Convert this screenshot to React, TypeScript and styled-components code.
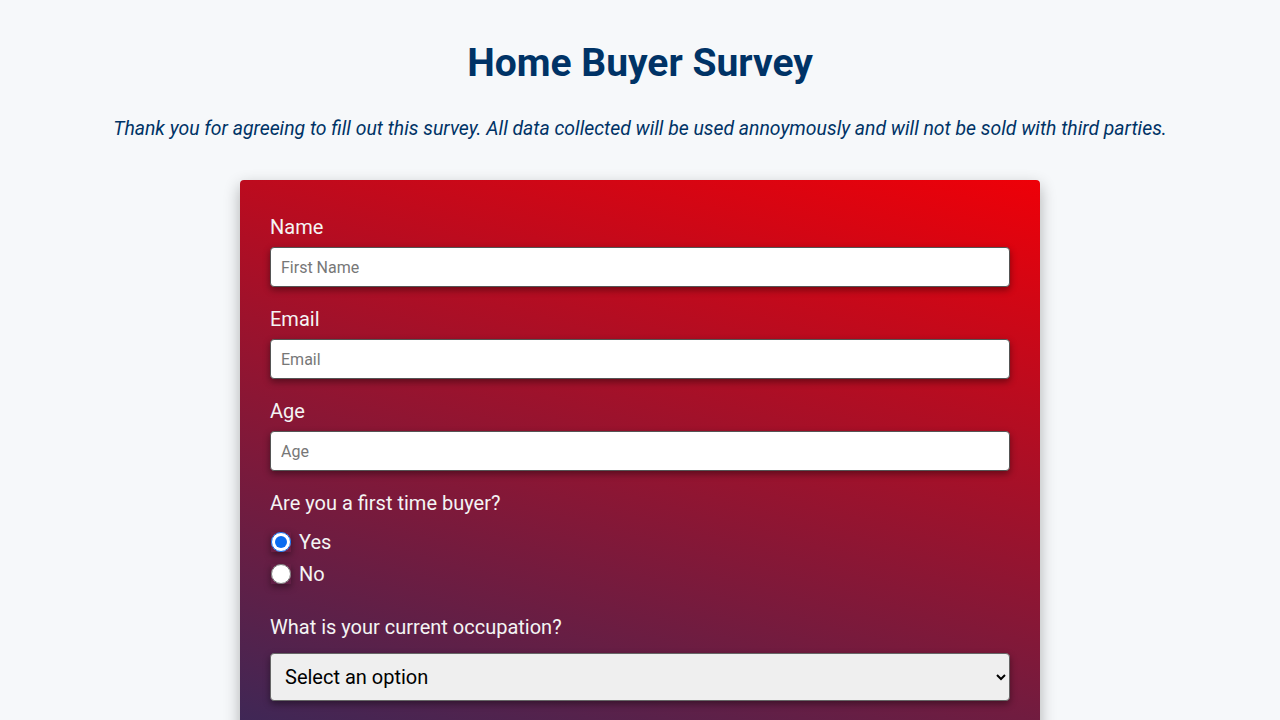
import React from "react";
import styled, { createGlobalStyle } from "styled-components";

const Global = createGlobalStyle`
  * { box-sizing: border-box; }
  body {
    margin: 0;
    background: #f6f8fa;
    font-family: Roboto, "Liberation Sans", sans-serif;
  }
`;

const Page = styled.main`
  display: flex;
  flex-direction: column;
  align-items: center;
  padding: 37px 0 60px;
`;

const Title = styled.h1`
  margin: 0;
  font-size: 39px;
  font-weight: 700;
  color: #003366;
  line-height: 52px;
`;

const Intro = styled.p`
  margin: 28px 0 39px;
  font-size: 19.4px;
  font-style: italic;
  color: #003366;
  line-height: 24px;
`;

const Card = styled.form`
  width: 800px;
  border-radius: 4px;
  padding: 36px 30px 40px;
  background: linear-gradient(195deg, #ee0008 0px, #3a2858 750px, #2c2c62 1100px);
  box-shadow: 0 6px 16px rgba(0, 0, 0, 0.3);
  display: flex;
  flex-direction: column;
`;

const Group = styled.div<{ $gap?: number }>`
  display: flex;
  flex-direction: column;
  margin-bottom: ${(p) => p.$gap ?? 21}px;
`;

const Label = styled.label<{ $space?: number }>`
  font-size: 20px;
  line-height: 23px;
  color: #f4f4f4;
  margin-bottom: ${(p) => p.$space ?? 8}px;
`;

const TextInput = styled.input`
  height: 40px;
  width: 100%;
  border: 1px solid #555;
  border-radius: 4px;
  padding: 0 10px;
  font-family: Roboto, "Liberation Sans", sans-serif;
  font-size: 16px;
  background: #fff;
  box-shadow: 0 3px 7px rgba(0, 0, 0, 0.4);
  &::placeholder { color: #777; }
`;

const RadioRow = styled.label`
  display: flex;
  align-items: center;
  gap: 8px;
  height: 32px;
  font-size: 20px;
  color: #f4f4f4;
`;

const Radio = styled.input`
  width: 20px;
  height: 20px;
  margin: 0 0 0 1px;
  accent-color: #0b6cf0;
  border-radius: 50%;
  box-shadow: 0 3px 7px rgba(0, 0, 0, 0.4);
`;

const Select = styled.select`
  height: 48px;
  width: 100%;
  border: 1px solid #666;
  border-radius: 4px;
  padding: 0 10px;
  font-family: Roboto, "Liberation Sans", sans-serif;
  font-size: 20px;
  color: #000;
  background: #efefef;
  box-shadow: 0 3px 7px rgba(0, 0, 0, 0.4);
`;

const TextArea = styled.textarea`
  height: 120px;
  width: 100%;
  border: 1px solid #555;
  border-radius: 4px;
  padding: 10px;
  font-family: Roboto, "Liberation Sans", sans-serif;
  font-size: 16px;
  box-shadow: 0 3px 7px rgba(0, 0, 0, 0.4);
`;

const Submit = styled.button`
  height: 48px;
  border: none;
  border-radius: 4px;
  background: #003366;
  color: #fff;
  font-family: Roboto, "Liberation Sans", sans-serif;
  font-size: 20px;
`;

export default function App() {
  return (
    <>
      <Global />
      <Page>
        <Title>Home Buyer Survey</Title>
        <Intro>
          Thank you for agreeing to fill out this survey. All data collected will be used annoymously and will not be sold with third parties.
        </Intro>
        <Card onSubmit={(e) => e.preventDefault()}>
          <Group>
            <Label htmlFor="name">Name</Label>
            <TextInput id="name" type="text" placeholder="First Name" />
          </Group>
          <Group>
            <Label htmlFor="email">Email</Label>
            <TextInput id="email" type="email" placeholder="Email" />
          </Group>
          <Group>
            <Label htmlFor="age">Age</Label>
            <TextInput id="age" type="number" placeholder="Age" />
          </Group>
          <Group $gap={26}>
            <Label $space={11}>Are you a first time buyer?</Label>
            <RadioRow>
              <Radio type="radio" name="first" defaultChecked />
              Yes
            </RadioRow>
            <RadioRow>
              <Radio type="radio" name="first" />
              No
            </RadioRow>
          </Group>
          <Group>
            <Label htmlFor="occ" $space={14}>What is your current occupation?</Label>
            <Select id="occ" defaultValue="">
              <option value="" disabled>Select an option</option>
              <option>Employed</option>
              <option>Self-employed</option>
              <option>Student</option>
              <option>Retired</option>
            </Select>
          </Group>
          <Group>
            <Label htmlFor="comments">Any comments or suggestions?</Label>
            <TextArea id="comments" placeholder="Enter your comment here..." />
          </Group>
          <Submit type="submit">Submit</Submit>
        </Card>
      </Page>
    </>
  );
}
